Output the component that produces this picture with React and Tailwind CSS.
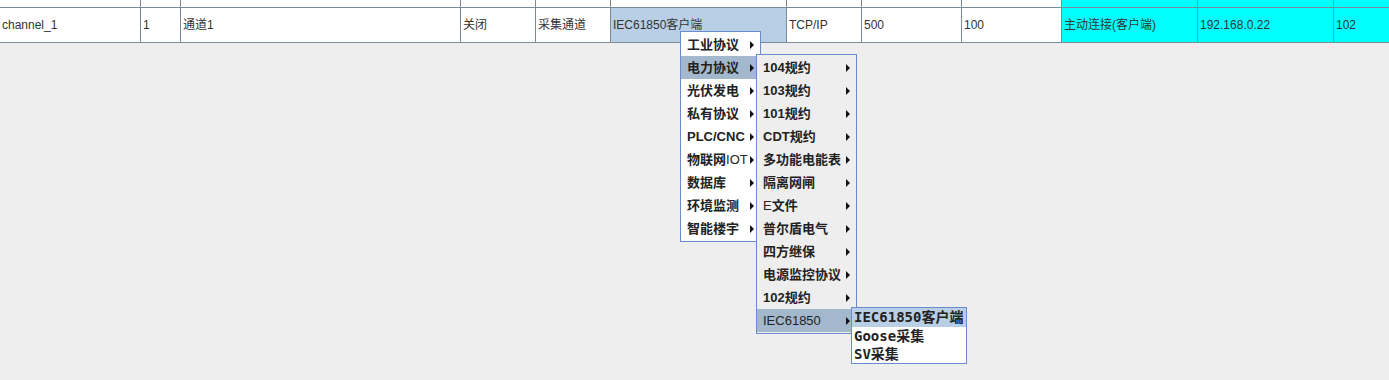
import React from 'react';

const cols = [
    { w: 'w-[141px]', text: 'channel_1' },
    { w: 'w-[40px]', text: '1' },
    { w: 'w-[280px]', text: '通道1' },
    { w: 'w-[75px]', text: '关闭' },
    { w: 'w-[75px]', text: '采集通道' },
    { w: 'w-[176px]', text: 'IEC61850客户端', bg: 'bg-[#b8cfe5]' },
    { w: 'w-[75px]', text: 'TCP/IP' },
    { w: 'w-[100px]', text: '500' },
    { w: 'w-[100px]', text: '100' },
    { w: 'w-[136px]', text: '主动连接(客户端)', bg: 'bg-[#00ffff]', topBg: 'bg-[#00ffff]' },
    { w: 'w-[136px]', text: '192.168.0.22', bg: 'bg-[#00ffff]', topBg: 'bg-[#00ffff]' },
    { w: 'flex-1', text: '102', bg: 'bg-[#00ffff]', topBg: 'bg-[#00ffff]', last: true },
];

const menu1 = ['工业协议', '电力协议', '光伏发电', '私有协议', 'PLC/CNC', ['物联网', 'IOT'], '数据库', '环境监测', '智能楼宇'];
const menu2 = ['104规约', '103规约', '101规约', 'CDT规约', '多功能电能表', '隔离网闸', ['', 'E', '文件'], '普尔盾电气', '四方继保', '电源监控协议', '102规约', ['', 'IEC61850']];
const menu3 = ['IEC61850客户端', 'Goose采集', 'SV采集'];

const Arrow = () => (
    <svg width="4" height="8" viewBox="0 0 4 8" className="shrink-0">
        <path d="M0 0 L4 4 L0 8 Z" fill="#111" />
    </svg>
);

const Label = ({ item }) => {
    if (Array.isArray(item)) {
        return (
            <span>
                {item[0]}
                <span className="font-normal">{item[1]}</span>
                {item[2]}
            </span>
        );
    }
    return <span>{item}</span>;
};

const MenuItem = ({ item, active }) => (
    <div className={`h-[23px] flex items-center justify-between pl-[6px] pr-[6px] ${active ? 'bg-[#a3b8cc]' : ''}`}>
        <Label item={item} />
        <Arrow />
    </div>
);

const App = () => {
    return (
        <div className="w-[1389px] h-[380px] bg-[#eeeeee] relative overflow-hidden text-[12px] text-[#333] font-['Liberation_Sans','Noto_Sans_CJK_SC',sans-serif]">
            <div className="flex h-[8px] border-b border-[#7a8a99]">
                {cols.map((c, i) => (
                    <div key={i} className={`${c.w} shrink-0 ${c.last ? '' : 'border-r'} border-[#7a8a99] ${c.topBg || 'bg-white'}`} />
                ))}
            </div>
            <div className="flex h-[35px] border-b border-[#7a8a99]">
                {cols.map((c, i) => (
                    <div key={i} className={`${c.w} shrink-0 ${c.last ? '' : 'border-r'} border-[#7a8a99] ${c.bg || 'bg-white'} flex items-center pl-[2px] whitespace-nowrap`}>
                        {c.text}
                    </div>
                ))}
            </div>

            <div className="absolute left-[680px] top-[31px] w-[81px] bg-white border border-[#6a8bcf] py-[1px] text-[13px] font-bold text-[#222]">
                {menu1.map((m, i) => (
                    <MenuItem key={i} item={m} active={i === 1} />
                ))}
            </div>

            <div className="absolute left-[756px] top-[54px] w-[101px] bg-[#eeeeee] border border-[#6a8bcf] py-[1px] text-[13px] font-bold text-[#222]">
                {menu2.map((m, i) => (
                    <MenuItem key={i} item={m} active={i === 11} />
                ))}
            </div>

            <div className="absolute left-[851px] top-[307px] w-[116px] bg-white border border-[#6a8bcf] text-[14px] font-bold text-[#222] font-['DejaVu_Sans_Mono','Noto_Sans_CJK_SC',monospace]">
                {menu3.map((m, i) => (
                    <div key={i} className={`${i === 0 ? 'h-[19px] bg-[#b8cfe5]' : 'h-[18px]'} flex items-center pl-[2px] whitespace-nowrap`}>
                        {m}
                    </div>
                ))}
            </div>
        </div>
    );
};

export default App;
